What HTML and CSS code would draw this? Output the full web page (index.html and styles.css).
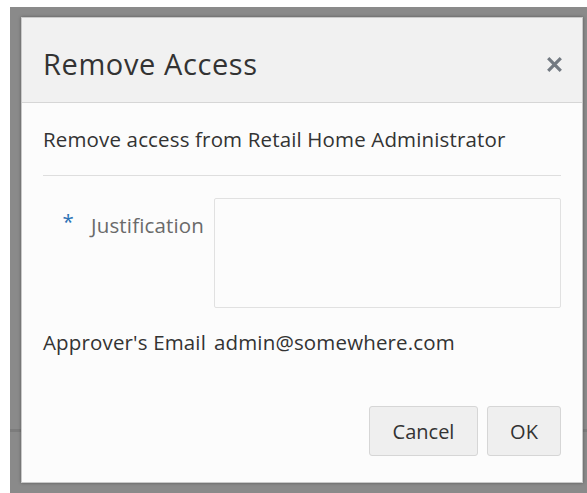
FILE: index.html
```html
<!DOCTYPE html>
<html lang="en">
<head>
<meta charset="utf-8">
<title>Remove Access</title>
<link rel="stylesheet" href="styles.css">
</head>
<body>
  <div class="page">
    <div class="page-rule"></div>
  </div>

  <div class="overlay">
    <div class="dialog" role="dialog" aria-labelledby="dlg-title">
      <header class="dialog-header">
        <h1 class="dialog-title" id="dlg-title">Remove Access</h1>
        <button class="close-btn" type="button" aria-label="Close">
          <svg width="17" height="17" viewBox="0 0 17 17" aria-hidden="true">
            <path d="M2.2 2.2 L14.8 14.8 M14.8 2.2 L2.2 14.8" stroke="currentColor" stroke-width="3.2" stroke-linecap="butt" fill="none"/>
          </svg>
        </button>
      </header>

      <div class="dialog-body">
        <p class="intro">Remove access from Retail Home Administrator</p>
        <hr class="divider">

        <div class="form">
          <div class="form-row form-row-top">
            <label class="form-label required" for="justification">
              <span class="req-mark">*</span>
              <span>Justification</span>
            </label>
            <textarea class="form-textarea" id="justification"></textarea>
          </div>
          <div class="form-row">
            <span class="form-label plain">Approver's Email</span>
            <span class="form-value">admin@somewhere.com</span>
          </div>
        </div>
      </div>

      <footer class="dialog-footer">
        <button class="btn" type="button">Cancel</button>
        <button class="btn btn-ok" type="button">OK</button>
      </footer>
    </div>
  </div>
</body>
</html>
```

FILE: styles.css
```css
* {
  box-sizing: border-box;
}

html,
body {
  margin: 0;
  padding: 0;
  height: 100%;
  background: #ffffff;
  overflow: hidden;
}

body {
  font-family: "Open Sans", "Noto Sans", "Liberation Sans", sans-serif;
  color: #333333;
}

/* page content underneath the modal overlay */
.page {
  height: 100%;
}

.page-rule {
  height: 432px;
  margin-left: 10px;
  border-bottom: 3px solid #e6e6e6;
}

/* dimmed modal backdrop */
.overlay {
  position: absolute;
  left: 10px;
  top: 7px;
  right: 0;
  bottom: 0;
  background: rgba(0, 0, 0, 0.46);
  padding: 10px 0 0 11px;
}

.dialog {
  width: 562px;
  height: 466px;
  background: #fcfcfc;
  border: 1px solid #c9c9c9;
  box-shadow: 0 0 3px rgba(0, 0, 0, 0.35);
  display: flex;
  flex-direction: column;
}

.dialog-header {
  height: 85px;
  flex: none;
  background: #f1f1f1;
  border-bottom: 1px solid #d6d6d6;
  display: flex;
  align-items: center;
  justify-content: space-between;
  padding: 8px 19px 0 21px;
}

.dialog-title {
  margin: 0;
  font-size: 29px;
  letter-spacing: 0.6px;
  font-weight: 400;
  line-height: 36px;
  color: #333333;
}

.close-btn {
  border: 0;
  background: none;
  padding: 0;
  width: 18px;
  height: 18px;
  display: flex;
  align-items: center;
  justify-content: center;
  color: #737a82;
  cursor: pointer;
}

.dialog-body {
  flex: 1;
  padding: 22px 21px 0;
  font-size: 20.5px;
  letter-spacing: 0.15px;
}

.intro {
  margin: 0;
  line-height: 28px;
}

.divider {
  margin: 22px 0 0;
  border: 0;
  border-top: 1px solid #dedede;
}

.form {
  display: grid;
  grid-template-columns: 162px 1fr;
  column-gap: 9px;
  row-gap: 20px;
  margin-top: 22px;
}

.form-row {
  display: contents;
}

.form-label {
  line-height: 28px;
  white-space: nowrap;
}

.form-label.required {
  color: #6a6a6a;
  display: flex;
  justify-content: flex-end;
  align-items: flex-start;
  gap: 17px;
  padding-top: 13px;
  padding-right: 1px;
}

.req-mark {
  color: #2a72b5;
  line-height: 20px;
}

.form-label.plain {
  color: #333333;
}

.form-textarea {
  height: 110px;
  width: 100%;
  resize: none;
  background: #fcfcfc;
  border: 1px solid #e1e1e1;
  border-radius: 2px;
  font: inherit;
}

.form-value {
  line-height: 28px;
}

.dialog-footer {
  flex: none;
  display: flex;
  justify-content: flex-end;
  gap: 9px;
  padding: 0 21px 26px;
}

.btn {
  height: 50px;
  width: 109px;
  font-family: inherit;
  font-size: 20px;
  color: #333333;
  background: #efefef;
  border: 1px solid #d6d6d6;
  border-radius: 3px;
  padding: 0;
}

.btn-ok {
  width: 74px;
}
```
